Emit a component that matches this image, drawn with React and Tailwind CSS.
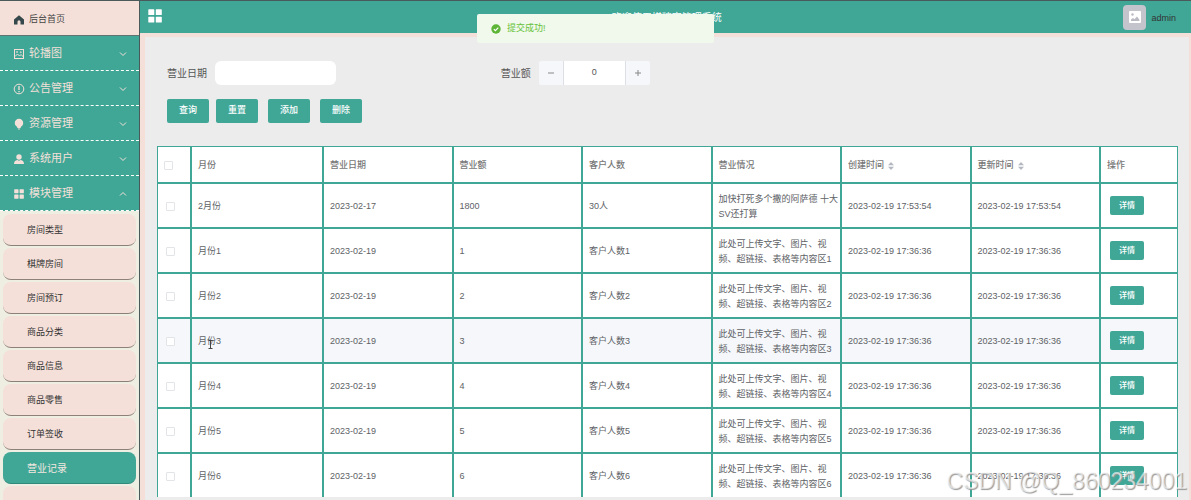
import React from 'react';

const HomeIcon = () => (
  <svg viewBox="0 0 12 12" className="w-3 h-3 shrink-0" fill="currentColor">
    <path d="M6 1.200 11 5.400V10.500H7.500V7.800a1.500 1.500 0 0 0-3 0V10.500H1V5.400Z" />
  </svg>
);

const PictureIcon = () => (
  <svg viewBox="0 0 12 12" className="w-3 h-3 shrink-0" fill="none" stroke="currentColor">
    <rect x="1.500" y="1.500" width="9" height="9" />
    <path d="M2 8.500 4.500 6l2 2 1.500-1.500 2.500 2.500" />
    <circle cx="4" cy="4" r=".5" />
    <circle cx="7.800" cy="4.200" r=".5" />
  </svg>
);

const WarningIcon = () => (
  <svg viewBox="0 0 12 12" className="w-3 h-3 shrink-0" fill="none" stroke="currentColor">
    <circle cx="6" cy="6" r="4.800" />
    <path d="M6 3v4M6 8v1.200" strokeWidth="1.300" />
  </svg>
);

const BulbIcon = () => (
  <svg viewBox="0 0 12 12" className="w-3 h-3 shrink-0" fill="currentColor">
    <path d="M6 .8a4.200 4.200 0 0 1 4.200 4.200c0 1.700-.9 3-2.200 3.700L7.600 10H4.400L4 8.700C2.700 8 1.800 6.700 1.800 5A4.200 4.200 0 0 1 6 .8ZM4.700 10.400h2.600L6.700 11.500H5.300Z" />
  </svg>
);

const UserIcon = () => (
  <svg viewBox="0 0 12 12" className="w-3 h-3 shrink-0" fill="currentColor">
    <circle cx="6" cy="4" r="2.700" />
    <path d="M1 11c0-2.200 1.200-3.700 3.200-4L6 7.800 7.800 7c2 .3 3.200 1.800 3.200 4Z" />
  </svg>
);

const GridIcon = ({ className = 'w-3 h-3 p-px' }) => (
  <svg viewBox="0 0 14 14" className={`${className} shrink-0`} fill="currentColor">
    <rect x="0.300" y="0.300" width="6" height="5.700" rx=".6" />
    <rect x="7.800" y="0.300" width="6" height="5.700" rx=".6" />
    <rect x="0.300" y="7.800" width="6" height="5.700" rx=".6" />
    <rect x="7.800" y="7.800" width="6" height="5.700" rx=".6" />
  </svg>
);

const Chevron = ({ open }) => (
  <svg viewBox="0 0 8 8" className="w-2 h-2 shrink-0" fill="none" stroke="currentColor">
    <path d={open ? 'M1 5.500 4 2.500l3 3' : 'M1 2.500l3 3 3-3'} />
  </svg>
);

const SortIcon = () => (
  <svg viewBox="0 0 6 8" className="w-[6px] h-2" fill="#b4b8c0">
    <path d="M0 3.200 3 0l3 3.200ZM0 4.800 3 8l3-3.200Z" />
  </svg>
);

const menus = [
  { name: '轮播图', Icon: PictureIcon },
  { name: '公告管理', Icon: WarningIcon },
  { name: '资源管理', Icon: BulbIcon },
  { name: '系统用户', Icon: UserIcon },
  { name: '模块管理', Icon: GridIcon, open: true },
];

const modules = ['房间类型', '棋牌房间', '房间预订', '商品分类', '商品信息', '商品零售', '订单签收', '营业记录', ''];

const rows = [
  {
    month: '2月份',
    date: '2023-02-17',
    amount: '1800',
    guests: '30人',
    note: '加快打死多个撒的阿萨德 十大SV还打算',
    time: '2023-02-19 17:53:54',
  },
  ...[1, 2, 3, 4, 5, 6].map((n) => ({
    month: `月份${n}`,
    date: '2023-02-19',
    amount: `${n}`,
    guests: `客户人数${n}`,
    note: `此处可上传文字、图片、视频、超链接、表格等内容区${n}`,
    time: '2023-02-19 17:36:36',
    hover: n === 3,
  })),
];

const columns = [
  { label: '月份' },
  { label: '营业日期' },
  { label: '营业额' },
  { label: '客户人数' },
  { label: '营业情况' },
  { label: '创建时间', sortable: true },
  { label: '更新时间', sortable: true },
  { label: '操作' },
];

const Sidebar = () => (
  <aside className="w-[140px] shrink-0 overflow-hidden border-r border-[#4a5a5a] bg-[#eeeee2]">
    <a href="#home" className="flex h-[35px] items-center gap-1 border-b border-[#5d7470] bg-[#f5e0d9] pt-[3px] pl-[13px] text-[9px] text-[#444]">
      <span className="text-[#35484b]"><HomeIcon /></span>
      后台首页
    </a>
    <nav>
      {menus.map(({ name, Icon, open }) => (
        <button
          key={name}
          type="button"
          className="flex h-[35px] w-full items-center gap-1 border-b border-dashed border-white bg-[#40a797] pt-px pr-3 pl-[13px] text-[11px] text-[#f5e0d9]"
        >
          <Icon />
          <span className="flex-1 text-left">{name}</span>
          <Chevron open={open} />
        </button>
      ))}
      <ul className="space-y-[2px] px-[3px] pt-[3px]">
        {modules.map((name) => (
          <li key={name}>
            <a
              href="#module"
              className={
                name === '营业记录'
                  ? 'flex h-8 items-center rounded-lg border-b border-[#2f8a7c] bg-[#40a797] pt-[2px] pl-6 text-[10px] text-[#f5e8e0]'
                  : 'flex h-8 items-center rounded-lg border-b border-[#8d8279] bg-[#f5e0d9] pt-[2px] pl-6 text-[9px] text-[#333]'
              }
            >
              {name}
            </a>
          </li>
        ))}
      </ul>
    </nav>
  </aside>
);

const Topbar = () => (
  <header className="flex h-8 shrink-0 items-center bg-[#40a797] px-2">
    <button type="button" aria-label="菜单" className="pb-[2px] text-white">
      <GridIcon className="w-[14px] h-[14px]" />
    </button>
    <h1 className="flex-1 pl-12 text-center text-[10px] text-white">欢迎使用棋牌室管理系统</h1>
    <div className="flex items-center gap-[5px] pr-[7px]">
      <span className="flex h-[25px] w-[23px] items-center justify-center rounded bg-[#c4c5cc]">
        <svg viewBox="0 0 12 12" className="w-3 h-3">
          <rect width="12" height="12" rx="1" fill="#fff" />
          <circle cx="3.500" cy="3.500" r="1.200" fill="#b9bac2" />
          <path d="M2 10V8.500L4 7l1.500 1.200L8 5.500l2.300 3V10Z" fill="#b9bac2" />
        </svg>
      </span>
      <span className="pt-[3px] text-[9px] text-[#333]">admin</span>
    </div>
  </header>
);

const ActionButton = ({ children }) => (
  <button type="button" className="h-6 w-[42px] rounded-xs bg-[#40a797] text-[9px] font-medium text-white">
    {children}
  </button>
);

const SearchForm = () => (
  <form className="px-[10px]">
    <div className="flex h-6 items-center">
      <div className="flex w-1/3 items-center gap-2">
        <label htmlFor="date" className="text-[10px] text-[#555]">营业日期</label>
        <input id="date" type="text" className="h-6 w-[121px] rounded-md bg-white px-2 text-[9px] outline-none" />
      </div>
      <div className="flex items-center gap-2">
        <label htmlFor="amount" className="text-[10px] text-[#555]">营业额</label>
        <div className="flex h-6 overflow-hidden rounded-xs text-[#888]">
          <button type="button" aria-label="减少" className="flex w-[25px] items-center justify-center border-r border-[#dcdfe6] bg-[#f5f7fa]">
            <svg viewBox="0 0 8 8" className="w-2 h-2" stroke="currentColor"><path d="M1 4h6" /></svg>
          </button>
          <input id="amount" type="text" defaultValue="0" className="w-[61px] bg-white text-center text-[9px] text-[#555] outline-none" />
          <button type="button" aria-label="增加" className="flex w-[25px] items-center justify-center border-l border-[#dcdfe6] bg-[#f5f7fa]">
            <svg viewBox="0 0 8 8" className="w-2 h-2" stroke="currentColor"><path d="M1 4h6M4 1v6" /></svg>
          </button>
        </div>
      </div>
    </div>
    <div className="mt-[14px] flex gap-[10px]">
      <div className="flex gap-[7px]">
        <ActionButton>查询</ActionButton>
        <ActionButton>重置</ActionButton>
      </div>
      <ActionButton>添加</ActionButton>
      <ActionButton>删除</ActionButton>
    </div>
  </form>
);

const cell = 'border border-[#40a797] pt-[2px] pl-[6px]';
const checkbox = 'block h-[9px] w-[9px] appearance-none rounded-[1px] border border-[#e2e4e8] bg-white';

const RecordTable = () => (
  <table className="mt-[23px] w-full table-fixed border-separate border-spacing-0 bg-white text-[9px] leading-[15px] text-[#606266]">
    <colgroup>
      <col className="w-[34px]" />
      <col className="w-[132px]" />
      <col />
      <col />
      <col />
      <col />
      <col />
      <col />
      <col className="w-[78px]" />
    </colgroup>
    <thead>
      <tr className="h-[37px] text-left">
        <th className={cell}>
          <input type="checkbox" aria-label="全选" className={checkbox} />
        </th>
        {columns.map(({ label, sortable }) => (
          <th key={label} className={`${cell} font-medium text-[#777]`}>
            <span className="flex items-center gap-1">
              {label}
              {sortable && <SortIcon />}
            </span>
          </th>
        ))}
      </tr>
    </thead>
    <tbody>
      {rows.map((row) => (
        <tr key={row.month} className={row.hover ? 'h-[45px] bg-[#f5f7fa]' : 'h-[45px]'}>
          <td className="border border-[#40a797] pt-px pl-2">
            <input type="checkbox" aria-label={row.month} className={checkbox} />
          </td>
          <td className={cell}>
            <span className="relative">
              {row.month}
              {row.hover && (
                <svg viewBox="0 0 5 9" className="absolute top-1 left-[10px] h-[9px] w-[5px]" fill="none" stroke="#444">
                  <path d="M.5 .5h4M.5 8.500h4M2.500 .5v8" />
                </svg>
              )}
            </span>
          </td>
          <td className={cell}>{row.date}</td>
          <td className={cell}>{row.amount}</td>
          <td className={cell}>{row.guests}</td>
          <td className={cell}>{row.note}</td>
          <td className={cell}>{row.time}</td>
          <td className={cell}>{row.time}</td>
          <td className="border border-[#40a797] pl-[9px]">
            <button type="button" className="block h-[19px] w-[34px] rounded-xs bg-[#40a797] text-[8px] font-medium text-white">
              详情
            </button>
          </td>
        </tr>
      ))}
    </tbody>
  </table>
);

const Toast = () => (
  <div role="status" className="absolute inset-x-0 top-[13px] mx-auto flex h-[29px] w-[237px] items-center gap-[6px] rounded-xs bg-[#f0f9eb] pl-[14px] text-[9px] text-[#67c23a]">
    <svg viewBox="0 0 10 10" className="w-[10px] h-[10px]">
      <circle cx="5" cy="5" r="4.700" fill="#5cb536" />
      <path d="M2.800 5.100 4.400 6.600 7.300 3.600" fill="none" stroke="#fff" strokeWidth="1.200" />
    </svg>
    提交成功!
  </div>
);

const App = () => {
  return (
    <div className="relative flex h-screen overflow-hidden border-t border-[#4a5a5a] bg-[#f5e0d9] font-['Liberation_Sans','Noto_Sans_CJK_SC',sans-serif]">
      <Sidebar />
      <div className="flex min-w-0 flex-1 flex-col">
        <Topbar />
        <main className="mt-1 mr-[2px] ml-[5px] flex min-h-0 flex-1 flex-col bg-[#ececec] pr-[11px] pb-[3px] pl-3">
          <div className="min-h-0 flex-1 overflow-hidden pt-6">
            <SearchForm />
            <RecordTable />
          </div>
        </main>
      </div>
      <Toast />
      <div className="pointer-events-none absolute right-1 bottom-[5px] text-[23px] leading-7 text-white/60 [text-shadow:1px_1px_1px_#999]">
        CSDN @Q_860234001
      </div>
    </div>
  );
};

export default App;
